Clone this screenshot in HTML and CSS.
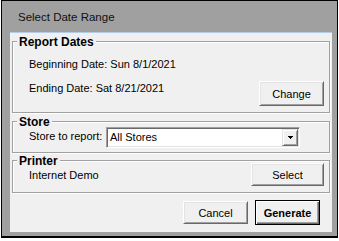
FILE: index.html
```html
<!DOCTYPE html>
<html>
<head>
<meta charset="utf-8">
<link rel="stylesheet" href="styles.css">
</head>
<body>
<div class="window">
  <div class="titlebar">Select Date Range</div>
  <div class="client">
    <div class="group group-dates">
      <div class="legend">Report Dates</div>
      <div class="line line-first">Beginning Date: Sun 8/1/2021</div>
      <div class="row row-dates">
        <span class="line line-end">Ending Date: Sat 8/21/2021</span>
        <button class="btn btn-change">Change</button>
      </div>
    </div>
    <div class="group group-store">
      <div class="legend">Store</div>
      <div class="row row-store">
        <span class="line store-label">Store to report:</span>
        <div class="combo">
          <span class="combo-text">All Stores</span>
          <span class="combo-btn"><svg width="5" height="3" viewBox="0 0 5 3" shape-rendering="crispEdges"><rect x="0" y="0" width="5" height="1" fill="#000"/><rect x="1" y="1" width="3" height="1" fill="#000"/><rect x="2" y="2" width="1" height="1" fill="#000"/></svg></span>
        </div>
      </div>
    </div>
    <div class="group group-printer">
      <div class="legend">Printer</div>
      <div class="row row-printer">
        <span class="line printer-name">Internet Demo</span>
        <button class="btn btn-select">Select</button>
      </div>
    </div>
    <div class="footer">
      <button class="btn btn-cancel">Cancel</button>
      <button class="btn btn-default">Generate</button>
    </div>
  </div>
</div>
</body>
</html>
```
FILE: styles.css
```css
* { box-sizing: border-box; }
html, body { margin: 0; padding: 0; }
body {
  background: #ffffff;
  font-family: "Liberation Sans", Arial, sans-serif;
  color: #000;
}
.window {
  margin-left: 1px;
  width: 337px;
  height: 238px;
  border-style: solid;
  border-color: #000;
  border-width: 1px 1px 2px 1px;
  background: #a0a0a0;
  display: flex;
  flex-direction: column;
}
.titlebar {
  height: 31px;
  padding: 1px 0 0 16px;
  font-size: 11.5px;
  line-height: 30px;
  color: #111;
}
.client {
  margin: 0 5px 4px 8px;
  height: 200px;
  border-top: 1px solid #b4cce8;
  background: #f0f0f0;
  padding: 8px 2px 7px 2px;
  display: flex;
  flex-direction: column;
}
.group {
  border: 1px solid #a0a0a0;
  box-shadow: inset 1px 1px 0 #fff, 1px 1px 0 #fff;
  padding: 0 5px 6px 16px;
}
.legend {
  width: max-content;
  margin: -6px 0 0 -12px;
  padding: 0 2px;
  background: #f0f0f0;
  font-weight: bold;
  font-size: 12px;
  line-height: 12px;
}
.line {
  font-size: 11px;
  line-height: 13px;
}
.line-first { margin-top: 10px; }
.row {
  display: flex;
  align-items: flex-start;
}
.row-dates { margin-top: 10px; justify-content: space-between; }
.line-end { margin-top: 1px; }

.group-store { margin-top: 8px; padding-bottom: 4px; }
.row-store { margin-top: -1px; }
.store-label { width: 77px; margin-top: 3px; white-space: nowrap; }
.combo {
  width: 194px;
  height: 21px;
  border: 1px solid;
  border-color: #a0a0a0 #fff #fff #a0a0a0;
  box-shadow: inset 1px 1px 0 #696969, inset -1px -1px 0 #e3e3e3;
  background: #fff;
  padding: 1px;
  display: flex;
}
.combo-text {
  flex: 1;
  padding-left: 2px;
  font-size: 11px;
  line-height: 17px;
}
.combo-btn {
  width: 16px;
  height: 17px;
  background: #f0f0f0;
  border: 1px solid;
  border-color: #e3e3e3 #696969 #696969 #e3e3e3;
  box-shadow: inset 1px 1px 0 #fff, inset -1px -1px 0 #a0a0a0;
  display: flex;
  align-items: center;
  justify-content: center;
}
.combo-btn svg { display: block; margin-left: 1px; }

.group-printer { margin-top: 7px; }
.row-printer { margin-top: -4px; justify-content: space-between; }
.printer-name { margin-top: 6px; }

.btn {
  font-family: "Liberation Sans", Arial, sans-serif;
  font-size: 11px;
  color: #000;
  background: #f0f0f0;
  border: 1px solid;
  border-color: #fff #696969 #696969 #fff;
  box-shadow: inset 1px 1px 0 #e3e3e3, inset -1px -1px 0 #a0a0a0;
  padding: 0;
  margin: 0;
  text-align: center;
}
.btn-change { width: 65px; height: 25px; padding-top: 1px; }
.btn-select { width: 73px; height: 23px; }
.footer {
  margin-top: 7px;
  display: flex;
  align-items: center;
  justify-content: flex-end;
  gap: 7px;
  padding-right: 10px;
}
.btn-cancel { width: 65px; height: 23px; }
.btn-default {
  width: 65px;
  height: 25px;
  border: 1px solid #000;
  box-shadow: inset 1px 1px 0 #fff, inset -1px -1px 0 #696969, inset -2px -2px 0 #a0a0a0;
  font-weight: bold;
}
```
